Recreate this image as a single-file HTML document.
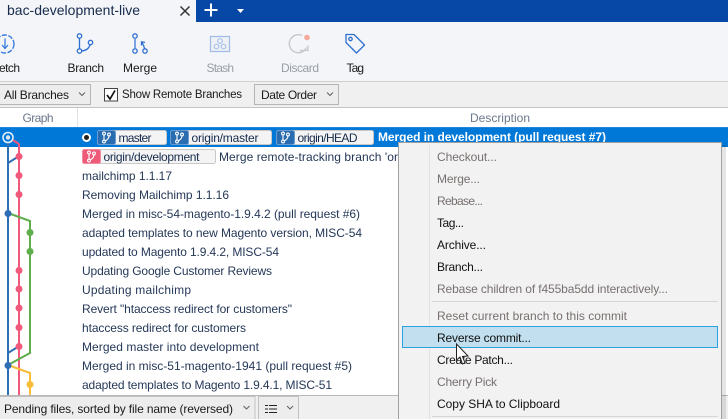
<!DOCTYPE html>
<html><head><meta charset="utf-8"><style>
html,body{margin:0;padding:0;background:#fff;overflow:hidden}
svg{display:block}
text{font-family:"Liberation Sans",sans-serif;font-size:12px;fill:#253858}
.t{fill:#172b4d}.k{fill:#111}.g{fill:#77706f}.d{fill:#9a9ea6}.w{fill:#fff}.b{fill:#1a1a1a}
</style></head><body>
<svg width="728" height="419" viewBox="0 0 728 419" xmlns="http://www.w3.org/2000/svg">
<defs>
<g id="bi" fill="none" stroke="#fff" stroke-width="1.1"><circle cx="0" cy="-4" r="1.4"/><circle cx="0" cy="4" r="1.4"/><circle cx="5" cy="-3" r="1.4"/><path d="M0-2.6V2.6M5-1.6C5 1 3 2.5 1.2 3.4"/></g>
</defs>
<rect width="728" height="419" fill="#fff"/>
<!-- tab bar -->
<rect width="728" height="22" fill="#f3f5f8"/>
<rect x="196" width="532" height="22" fill="#0747a6"/>
<text x="7" y="15" style="font-size:14px" fill="#172b4d" class="t" textLength="133" lengthAdjust="spacing">bac-development-live</text>
<path d="M180.500 6.500L189.500 15.500M189.500 6.500L180.500 15.500" stroke="#333" stroke-width="1.500"/>
<path d="M211 3.500V16.500M204.500 10H217.500" stroke="#fff" stroke-width="2"/>
<path d="M237 9H244L240.500 13Z" fill="#fff"/>
<!-- toolbar -->
<rect y="22" width="728" height="59" fill="#f3f5f8"/>
<rect y="81" width="728" height="1" fill="#cfcfcf"/>
<circle cx="5" cy="44" r="9" fill="none" stroke="#3a7bdc" stroke-width="1.400" stroke-dasharray="5 1.500"/>
<path d="M5 38.500V48M2 45L5 48.500L8 45" fill="none" stroke="#3a7bdc" stroke-width="1.300"/>
<g fill="none" stroke="#2f6fd0" stroke-width="1.300">
<circle cx="79.500" cy="36" r="2.200"/><circle cx="79.500" cy="51" r="2.200"/><circle cx="90.500" cy="42.500" r="2.200"/>
<path d="M79.500 38.200V48.800M90 44.800C89 48.500 86 50.500 81.700 51"/>
<circle cx="135" cy="36" r="2.200"/><circle cx="135" cy="51" r="2.200"/><circle cx="145" cy="51" r="2.200"/>
<path d="M135 38.200V48.800" stroke="#6f9be0" stroke-width="1.800"/>
<path d="M144.500 48.800C144 46 143 44 141.500 42M141.500 45.500L141.500 41.800L145 42.500"/>
</g>
<g fill="none" stroke="#a9c1e6" stroke-width="1.200">
<rect x="210.500" y="36.500" width="19" height="15" stroke="#9fbbe6" fill="#eef2f8"/>
<circle cx="220" cy="41" r="2.300"/><circle cx="216.500" cy="46.500" r="2.300"/><circle cx="223.500" cy="46.500" r="2.300"/>
</g>
<path d="M302 35.500A9 9 0 1 0 306.500 47.500" fill="none" stroke="#c3c7ce" stroke-width="1.400"/>
<path d="M300 50.500H308V45.500M303 53.500" fill="none" stroke="#c3c7ce" stroke-width="1.300"/>
<circle cx="307" cy="37.500" r="2.800" fill="#f7a79b"/>
<g fill="none" stroke="#2f6fd0" stroke-width="1.300"><path d="M346 34.500H354L364.500 45L356.500 53L346 42.500Z" stroke-linejoin="round"/><circle cx="350.500" cy="39" r="1.700"/></g>
<text x="-1" y="72" class="b" textLength="21" lengthAdjust="spacing">etch</text>
<text x="67.500" y="72" class="b" textLength="36.500" lengthAdjust="spacing">Branch</text>
<text x="123" y="72" class="b" textLength="34" lengthAdjust="spacing">Merge</text>
<text x="206.500" y="72" class="d" textLength="27.500" lengthAdjust="spacing">Stash</text>
<text x="281" y="72" class="d" textLength="38" lengthAdjust="spacing">Discard</text>
<text x="346.500" y="72" class="b" textLength="17.500" lengthAdjust="spacing">Tag</text>
<!-- filter bar -->
<rect y="82" width="728" height="25" fill="#f0f0f0"/>
<rect y="107" width="728" height="1" fill="#c4c4c4"/>
<rect x="-2" y="84.500" width="92.500" height="20" fill="#ededed" stroke="#b5b5b5"/>
<text x="4" y="99" class="b" textLength="65" lengthAdjust="spacing">All Branches</text>
<path d="M79 92.500L82 95.500L85 92.500" fill="none" stroke="#666" stroke-width="1.100"/>
<rect x="104.500" y="88.500" width="13" height="12.500" fill="#fff" stroke="#444"/>
<path d="M107 95L110 99L115 90.500" fill="none" stroke="#111" stroke-width="1.700"/>
<text x="122" y="98" class="b" style="font-size:11.500px" textLength="120" lengthAdjust="spacing">Show Remote Branches</text>
<rect x="254.500" y="84.500" width="84" height="20" fill="#ededed" stroke="#b5b5b5"/>
<text x="261" y="99" class="b" textLength="56" lengthAdjust="spacing">Date Order</text>
<path d="M327 92.500L330 95.500L333 92.500" fill="none" stroke="#666" stroke-width="1.100"/>
<!-- header -->
<rect y="108" width="728" height="19" fill="#fff"/>
<rect x="77" y="108" width="1" height="19" fill="#e2e2e2"/>
<text x="22.500" y="122" style="fill:#6b778c" textLength="31" lengthAdjust="spacing">Graph</text>
<text x="470" y="122" style="fill:#6b778c" textLength="60" lengthAdjust="spacing">Description</text>
<!-- selected row -->
<rect y="127" width="728" height="20" fill="#0078d7"/>
<rect y="127" width="728" height="1" fill="#1e88dc"/>
<!-- row text -->
<text x="219" y="161" textLength="179" lengthAdjust="spacing">Merge remote-tracking branch 'or</text>
<text x="82" y="180" textLength="90" lengthAdjust="spacing">mailchimp 1.1.17</text>
<text x="82" y="199" textLength="147" lengthAdjust="spacing">Removing Mailchimp 1.1.16</text>
<text x="82" y="218" textLength="278" lengthAdjust="spacing">Merged in misc-54-magento-1.9.4.2 (pull request #6)</text>
<text x="82" y="237" textLength="280" lengthAdjust="spacing">adapted templates to new Magento version, MISC-54</text>
<text x="82" y="256" textLength="197" lengthAdjust="spacing">updated to Magento 1.9.4.2, MISC-54</text>
<text x="82" y="275" textLength="190" lengthAdjust="spacing">Updating Google Customer Reviews</text>
<text x="82" y="294" textLength="109" lengthAdjust="spacing">Updating mailchimp</text>
<text x="82" y="313" textLength="210" lengthAdjust="spacing">Revert "htaccess redirect for customers"</text>
<text x="82" y="332" textLength="164" lengthAdjust="spacing">htaccess redirect for customers</text>
<text x="82" y="351" textLength="177" lengthAdjust="spacing">Merged master into development</text>
<text x="82" y="370" textLength="270" lengthAdjust="spacing">Merged in misc-51-magento-1941 (pull request #5)</text>
<text x="82" y="389" textLength="250" lengthAdjust="spacing">adapted templates to Magento 1.9.4.1, MISC-51</text>
<!-- labels -->
<circle cx="86.500" cy="137.500" r="4.500" fill="#fff"/><circle cx="86.500" cy="137.500" r="2.500" fill="#222"/>
<rect x="97.500" y="130.500" width="69" height="14" rx="2" fill="#f4f4f4" stroke="#c8c8c8"/>
<rect x="97.500" y="130.500" width="18" height="14" rx="2" fill="#2a6cb0" stroke="#6a9bd0"/>
<use href="#bi" x="104" y="137.500"/>
<text x="118.500" y="142" class="t" textLength="33" lengthAdjust="spacing">master</text>
<rect x="170.500" y="130.500" width="101" height="14" rx="2" fill="#f4f4f4" stroke="#c8c8c8"/>
<rect x="170.500" y="130.500" width="18" height="14" rx="2" fill="#2a6cb0" stroke="#6a9bd0"/>
<use href="#bi" x="177" y="137.500"/>
<text x="191.500" y="142" class="t" textLength="67" lengthAdjust="spacing">origin/master</text>
<rect x="276.500" y="130.500" width="97" height="14" rx="2" fill="#f4f4f4" stroke="#c8c8c8"/>
<rect x="276.500" y="130.500" width="18" height="14" rx="2" fill="#2a6cb0" stroke="#6a9bd0"/>
<use href="#bi" x="283" y="137.500"/>
<text x="297.500" y="142" class="t" textLength="60" lengthAdjust="spacing">origin/HEAD</text>
<text x="378" y="141" class="w" style="font-weight:bold" textLength="228" lengthAdjust="spacing">Merged in development (pull request #7)</text>
<rect x="82.500" y="149.500" width="133" height="14" rx="2" fill="#f4f4f4" stroke="#c8c8c8"/>
<rect x="82.500" y="149.500" width="18" height="14" rx="2" fill="#ee5a78" stroke="#f08aa0"/>
<use href="#bi" x="89" y="156.500"/>
<text x="103.500" y="161" class="t" textLength="96" lengthAdjust="spacing">origin/development</text>
<!-- graph -->
<g fill="none" stroke-width="2">
<path d="M19 144V395" stroke="#f0597a"/>
<path d="M8 137L19 144" stroke="#f0597a"/>
<path d="M8 137V395" stroke="#2f6eb5"/>
<path d="M8 163L16 158M8 353L16 348" stroke="#2f6eb5"/>
<path d="M8 213L30 221V353L8 365" stroke="#5fae4d"/>
<path d="M8 365L30 373V395" stroke="#f9bc37"/>
</g>
<g fill="#f0597a"><circle cx="19" cy="156.500" r="3.500"/><circle cx="19" cy="175.500" r="3.500"/><circle cx="19" cy="194.500" r="3.500"/><circle cx="19" cy="270.500" r="3.500"/><circle cx="19" cy="289" r="3.500"/><circle cx="19" cy="308" r="3.500"/><circle cx="19" cy="327.500" r="3.500"/><circle cx="19" cy="346.500" r="3.500"/></g>
<g fill="#5fae4d"><circle cx="30" cy="232.500" r="3.500"/><circle cx="30" cy="251.500" r="3.500"/></g>
<g fill="#2f6eb5"><circle cx="8" cy="213.500" r="3.500"/><circle cx="8" cy="365.500" r="3.500"/></g>
<circle cx="30" cy="384.500" r="3.500" fill="#f9bc37"/>
<circle cx="8" cy="137.500" r="5" fill="#0078d7" stroke="#e8f2fb" stroke-width="1.500"/>
<circle cx="8" cy="137.500" r="2.200" fill="#dfe9f5"/>
<!-- bottom -->
<rect y="395" width="728" height="24" fill="#f0f0f0"/>
<rect y="395" width="728" height="1" fill="#b8b8b8"/>
<rect x="-2" y="396.500" width="257" height="24" fill="#ededed" stroke="#c2c2c2"/>
<text x="4" y="413" class="b" textLength="229" lengthAdjust="spacing">Pending files, sorted by file name (reversed)</text>
<path d="M243.500 406L246.500 409L249.500 406" fill="none" stroke="#666" stroke-width="1.100"/>
<rect x="258.500" y="396.500" width="40" height="24" fill="#ededed" stroke="#c2c2c2"/>
<path d="M265 405.500H277M265 409H277M265 412.500H277" stroke="#222" stroke-width="1" stroke-dasharray="3 1 8"/>
<path d="M287 406L290 409L293 406" fill="none" stroke="#666" stroke-width="1.100"/>
<!-- menu -->
<rect x="401" y="145" width="325" height="276" fill="#000" opacity=".1"/>
<rect x="398.500" y="142.500" width="323" height="280" fill="#f2f2f2" stroke="#a0a0a0"/>
<rect x="429" y="145" width="1" height="274" fill="#e2e2e2"/>
<text x="437" y="161" class="g" textLength="60" lengthAdjust="spacing">Checkout...</text>
<text x="437" y="183" class="g" textLength="43" lengthAdjust="spacing">Merge...</text>
<text x="437" y="205" class="g" textLength="46" lengthAdjust="spacing">Rebase...</text>
<text x="437" y="227" class="k" textLength="27" lengthAdjust="spacing">Tag...</text>
<text x="437" y="249" class="k" textLength="49" lengthAdjust="spacing">Archive...</text>
<text x="437" y="271" class="k" textLength="46" lengthAdjust="spacing">Branch...</text>
<text x="437" y="293" class="g" textLength="231" lengthAdjust="spacing">Rebase children of f455ba5dd interactively...</text>
<rect x="432" y="301" width="286" height="1" fill="#d6d6d6"/>
<text x="437" y="320" class="g" textLength="190" lengthAdjust="spacing">Reset current branch to this commit</text>
<rect x="402.500" y="326.500" width="315" height="21" fill="#c1dfee" stroke="#29a3e0"/>
<text x="437" y="342" class="k" textLength="94" lengthAdjust="spacing">Reverse commit...</text>
<text x="437" y="364" class="k" textLength="76" lengthAdjust="spacing">Create Patch...</text>
<text x="437" y="386" class="g" textLength="60" lengthAdjust="spacing">Cherry Pick</text>
<text x="437" y="408" class="k" textLength="123" lengthAdjust="spacing">Copy SHA to Clipboard</text>
<rect x="432" y="416" width="286" height="1" fill="#d6d6d6"/>
<path d="M456.500 344V360L460 357L462.500 364L465 363L462.500 356.500L468 356Z" fill="#fff" stroke="#222" stroke-width="1"/>
</svg>
</body></html>
